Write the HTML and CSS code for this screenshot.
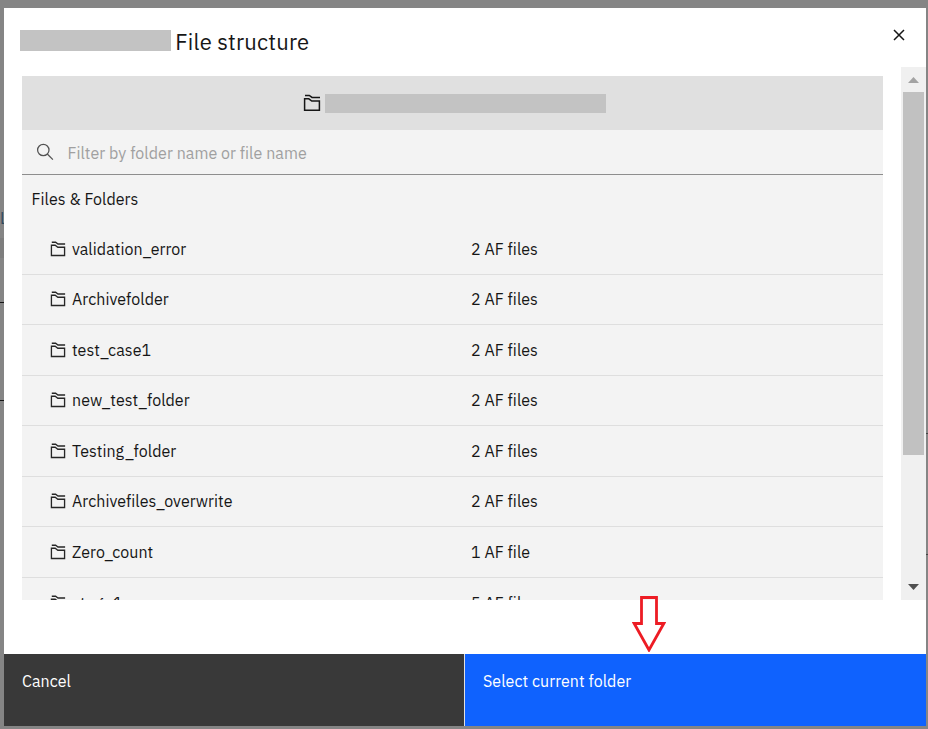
FILE: index.html
```html
<!DOCTYPE html>
<html lang="en">
<head>
<meta charset="utf-8">
<title>File structure</title>
<link rel="stylesheet" href="styles.css">
</head>
<body>
<svg class="defs" aria-hidden="true">
  <symbol id="folders" viewBox="0 0 18 18">
    <path d="M2 1.4H6.3L9 3.4H17M1.6 4.8H5.8L8.8 7H16.4V16.3H1.6Z"/>
  </symbol>
</svg>
<div class="page-mark mark-link">L</div>
<div class="page-mark mark-panel"></div>
<div class="page-mark mark-a"></div>
<div class="page-mark mark-b"></div>
<div class="page-mark mark-c"></div>
<div class="page-mark mark-d"></div>
<main class="modal">
  <header class="modal-header">
    <span class="redacted redacted-title"></span>
    <h1>File structure</h1>
    <button class="close" aria-label="Close"><svg viewBox="0 0 12 12"><path d="M1 1L11 11M11 1L1 11"/></svg></button>
  </header>
  <div class="modal-body">
    <section class="browser">
      <div class="current">
        <svg class="icon-lg"><use href="#folders"/></svg>
        <span class="redacted redacted-path"></span>
      </div>
      <div class="search">
        <svg viewBox="0 0 18 18"><circle cx="7.3" cy="7" r="5.7"/><path d="M11.3 11L16.9 16.6"/></svg>
        <span>Filter by folder name or file name</span>
      </div>
      <h2>Files &amp; Folders</h2>
      <ul class="rows">
        <li><svg><use href="#folders"/></svg><span class="name">validation_error</span><span class="count">2 AF files</span></li>
        <li><svg><use href="#folders"/></svg><span class="name">Archivefolder</span><span class="count">2 AF files</span></li>
        <li><svg><use href="#folders"/></svg><span class="name">test_case1</span><span class="count">2 AF files</span></li>
        <li><svg><use href="#folders"/></svg><span class="name">new_test_folder</span><span class="count">2 AF files</span></li>
        <li><svg><use href="#folders"/></svg><span class="name">Testing_folder</span><span class="count">2 AF files</span></li>
        <li><svg><use href="#folders"/></svg><span class="name">Archivefiles_overwrite</span><span class="count">2 AF files</span></li>
        <li><svg><use href="#folders"/></svg><span class="name">Zero_count</span><span class="count">1 AF file</span></li>
        <li><svg><use href="#folders"/></svg><span class="name">stage1</span><span class="count">5 AF files</span></li>
      </ul>
    </section>
    <div class="scrollbar">
      <svg class="up" viewBox="0 0 11 6"><path d="M5.5 0L11 6H0Z"/></svg>
      <div class="thumb"></div>
      <svg class="down" viewBox="0 0 11 6"><path d="M0 0H11L5.5 6Z"/></svg>
    </div>
  </div>
  <footer>
    <button class="cancel">Cancel</button>
    <button class="select">Select current folder</button>
  </footer>
</main>
<svg class="arrow" viewBox="0 0 34 56"><path d="M9.5 1.5H24.5V27.5H31.8L17 54L2.2 27.5H9.5Z"/></svg>
</body>
</html>
```
FILE: styles.css
```css
* { box-sizing: border-box; }
body {
  margin: 0;
  height: 729px;
  padding: 8px 2px 3px 4px;
  overflow: hidden;
  background: #858585;
  color: #161616;
  font: 16px/20px "IBM Plex Sans", Roboto, sans-serif;
  letter-spacing: 0.05px;
}
.defs { position: absolute; width: 0; height: 0; }
svg { fill: none; flex: none; display: block; }
.page-mark { position: absolute; left: 0; width: 4px; height: 1px; background: #161616; overflow: hidden; }
.mark-link { top: 209px; height: 18px; background: none; color: #2f4a5e; line-height: 18px; }
.mark-panel { top: 238px; height: 20px; background: #7e7e7e; }
.mark-a { top: 302px; }
.mark-b { top: 400px; }
.mark-c { top: 433px; left: 926px; width: 2px; background: #444; }
.mark-d { top: 554px; left: 926px; width: 2px; background: #444; }
.modal { position: relative; height: 718px; background: #fff; display: flex; flex-direction: column; }
.modal-header { height: 59px; flex: none; display: flex; align-items: flex-start; padding: 0 21px 0 16px; }
.redacted { background: #c3c3c3; flex: none; }
.redacted-title { width: 151px; height: 21px; margin-top: 22px; }
h1 { margin: 20px 0 0 4.3px; font-size: 22px; line-height: 28px; font-weight: 400; letter-spacing: 0.2px; }
button { border: 0; padding: 0; background: none; font: inherit; letter-spacing: inherit; color: inherit; text-align: left; }
.close { margin: 21px 0 0 auto; }
.close svg { width: 12px; height: 12px; stroke: #161616; stroke-width: 1.5; }
.modal-body { height: 533px; flex: none; display: flex; justify-content: space-between; padding-left: 18px; }
.browser { width: 861px; height: 524px; margin-top: 9px; overflow: hidden; background: #f3f3f3; }
.current { height: 54px; background: #e0e0e0; display: flex; align-items: center; padding-left: 281px; }
.icon-lg { width: 18px; height: 18px; stroke: #161616; stroke-width: 1.5; }
.redacted-path { width: 281px; height: 19px; margin-left: 4px; }
.search { height: 45px; border-bottom: 1px solid #8d8d8d; display: flex; align-items: center; padding-left: 14px; color: #a0a0a0; }
.search span { padding-top: 1px; }
.search svg { width: 18px; height: 18px; margin-right: 13.5px; stroke: #525252; stroke-width: 1.25; }
h2 { margin: 0; height: 49.3px; padding: 14px 0 0 9.5px; font-size: 16px; line-height: 20px; font-weight: 400; }
.rows { list-style: none; margin: 0; padding: 0; }
.rows li { height: 50.5px; border-bottom: 1px solid #dedede; display: flex; align-items: center; padding: 0 0 0.6px 28px; }
.rows li:last-child { padding: 1.4px 0 0 28px; }
.rows li:last-child .name { letter-spacing: 0.4px; }
.rows svg { width: 16px; height: 16px; stroke: #262626; stroke-width: 1.5; }
.name { width: 399px; margin-left: 6px; }
.scrollbar { width: 25px; background: #f0f0f0; display: flex; flex-direction: column; align-items: center; }
.scrollbar svg { width: 11px; height: 6px; }
.up { margin-top: 10px; fill: #a3a3a3; }
.thumb { width: 21px; height: 363px; margin-top: 9px; background: #c1c1c1; }
.down { margin: auto 0 10px; fill: #505050; }
footer { height: 72px; margin-top: auto; display: flex; color: #fff; }
footer button { display: block; padding: 0 0 19px 18px; }
.cancel { width: 460px; background: #393939; }
.select { flex: 1; background: #0f62fe; border-left: 1px solid #e0e0e0; }
.arrow { position: absolute; left: 632px; top: 596px; width: 34px; height: 56px; stroke: #ed1c24; stroke-width: 2.8; }
```
